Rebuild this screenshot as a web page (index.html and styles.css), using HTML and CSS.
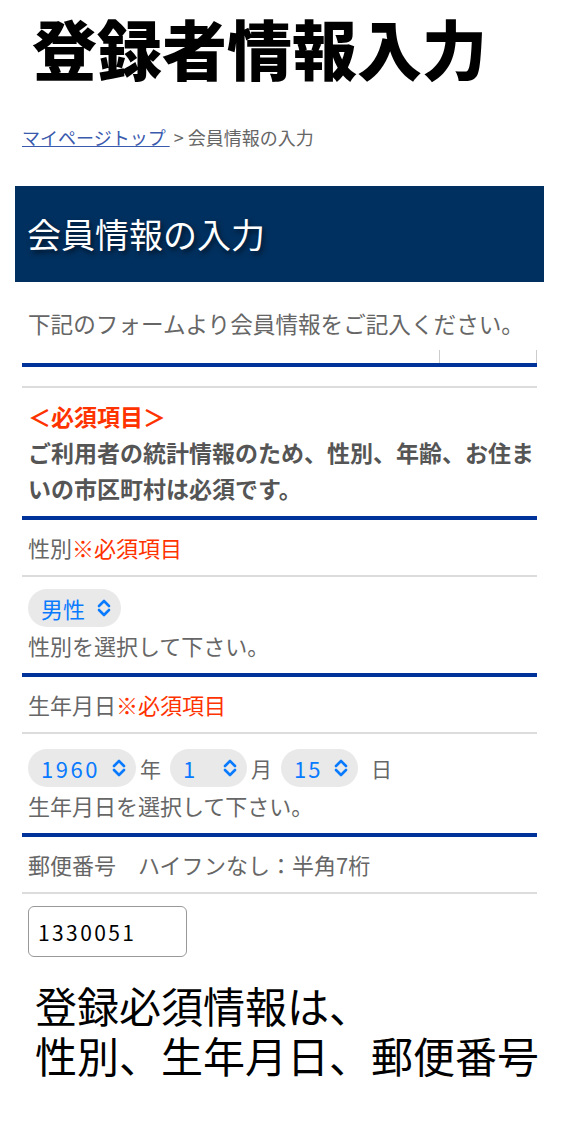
FILE: index.html
```html
<!DOCTYPE html>
<html lang="ja">
<head>
    <meta charset="UTF-8">
    <meta name="viewport" content="width=device-width, initial-scale=1.0">
    <title>登録者情報入力</title>
    <link rel="stylesheet" href="styles.css">
</head>
<body>
    <h1 class="page-title">登録者情報入力</h1>

    <p class="crumbs"><a href="#">マイページトップ </a>&nbsp;&gt; 会員情報の入力</p>

    <section class="panel">
        <h2 class="panel-head">会員情報の入力</h2>

        <div class="form">
            <p class="lead">下記のフォームより会員情報をご記入ください。</p>

            <div class="field">
                <span class="stub"></span>
                <div class="field-label empty"></div>
                <div class="notice">
                    <div class="notice-title">＜必須項目＞</div>
                    <p>ご利用者の統計情報のため、性別、年齢、お住まいの市区町村は必須です。</p>
                </div>
            </div>

            <div class="field">
                <div class="field-label">性別<span class="req">※必須項目</span></div>
                <div class="field-body">
                    <span class="pick w-sex">
                        <select id="sex">
                            <option>男性</option>
                            <option>女性</option>
                        </select>
                        <svg viewBox="0 0 16 18"><path d="M3 7 L8 2 L13 7 M3 11 L8 16 L13 11"/></svg>
                    </span>
                    <div class="help">性別を選択して下さい。</div>
                </div>
            </div>

            <div class="field">
                <div class="field-label">生年月日<span class="req">※必須項目</span></div>
                <div class="field-body">
                    <div class="date-row">
                        <span class="pick w-year">
                            <select id="year"><option>1960</option></select>
                            <svg viewBox="0 0 16 18"><path d="M3 7 L8 2 L13 7 M3 11 L8 16 L13 11"/></svg>
                        </span>
                        <span class="unit">年</span>
                        <span class="pick w-day">
                            <select id="month"><option>1</option></select>
                            <svg viewBox="0 0 16 18"><path d="M3 7 L8 2 L13 7 M3 11 L8 16 L13 11"/></svg>
                        </span>
                        <span class="unit">月</span>
                        <span class="pick w-day">
                            <select id="day"><option>15</option></select>
                            <svg viewBox="0 0 16 18"><path d="M3 7 L8 2 L13 7 M3 11 L8 16 L13 11"/></svg>
                        </span>
                        <span class="unit last">日</span>
                    </div>
                    <div class="help">生年月日を選択して下さい。</div>
                </div>
            </div>

            <div class="field">
                <div class="field-label">郵便番号　ハイフンなし：半角7桁</div>
                <div class="field-body zip-body">
                    <input type="text" class="zip" value="1330051">
                </div>
            </div>
        </div>
    </section>

    <p class="memo">登録必須情報は、<br>性別、生年月日、郵便番号</p>
</body>
</html>
```

FILE: styles.css
```css
body {
    margin: 0;
    padding: 0 38px 0 15px;
    font-family: "Noto Sans CJK JP", "Noto Sans", sans-serif;
    color: #666;
    background: #fff;
}

.page-title {
    margin: 0 0 0 17px;
    font-size: 65px;
    font-weight: 900;
    line-height: normal;
    color: #000;
}

.crumbs {
    margin: 31px 0 0 7px;
    font-size: 18px;
    line-height: 24px;
    color: #666;
}

.crumbs a {
    color: #3a5aae;
    text-decoration: underline;
}

.panel {
    margin-top: 37px;
}

.panel-head {
    margin: 0;
    height: 96px;
    padding: 0 12px;
    background: #00305f;
    color: #fff;
    font-size: 34px;
    font-weight: 400;
    line-height: 96px;
    text-shadow: 2px 3px 5px rgba(0, 0, 0, 0.6);
}

.form {
    margin: 0 7px;
}

.lead {
    margin: 0;
    padding: 24px 6px 0;
    height: 57px;
    font-size: 22.6px;
    line-height: 36px;
}

.field {
    position: relative;
    border-top: 4px solid #003399;
}

.stub {
    position: absolute;
    right: 0;
    top: -17px;
    width: 96px;
    height: 13px;
    background: #fff;
    border-left: 1px solid #ccc;
    border-right: 1px solid #ccc;
}

.field-label {
    height: 55px;
    padding: 0 6px;
    font-size: 22px;
    line-height: 55px;
    border-bottom: 2px solid #dcdcdc;
}

.field-label.empty {
    height: 19px;
}

.req {
    color: #ff3300;
}

.notice {
    padding: 10px 0 10px 6px;
    font-weight: 700;
    font-size: 23px;
    line-height: 36px;
}

.notice-title {
    color: #ff3300;
}

.notice p {
    margin: 0;
    color: #555;
}

.field-body {
    padding: 12px 6px 10px;
}

.pick {
    position: relative;
    display: inline-block;
    vertical-align: middle;
}

.pick select {
    -webkit-appearance: none;
    appearance: none;
    display: block;
    height: 38px;
    padding: 0 0 0 13px;
    border: none;
    border-radius: 19px;
    background: #e9e9e9;
    color: #0a7aff;
    font-family: inherit;
    font-size: 22px;
}

.pick svg {
    position: absolute;
    right: 9px;
    top: 10px;
    width: 16px;
    height: 18px;
    fill: none;
    stroke: #0a7aff;
    stroke-width: 2.6;
    stroke-linecap: round;
    stroke-linejoin: round;
    pointer-events: none;
}

.w-sex select { width: 93px; }
.w-year select { width: 108px; letter-spacing: 2.5px; }
.w-day select { width: 77px; letter-spacing: 2px; }

.date-row {
    display: flex;
    align-items: center;
    margin-top: 3px;
}

.unit {
    margin: 0 9px 0 4px;
    font-size: 21px;
}

.unit.last {
    margin-left: 13px;
}

.help {
    font-size: 22px;
    line-height: 36px;
}

.zip-body {
    padding-top: 12px;
}

.zip {
    display: block;
    width: 159px;
    height: 51px;
    box-sizing: border-box;
    margin: 0;
    padding: 0 9px;
    border: 1.5px solid #999;
    border-radius: 6px;
    font-family: inherit;
    font-size: 21px;
    letter-spacing: 2.4px;
    color: #000;
}

.memo {
    margin: 13px 0 0 20px;
    font-size: 42px;
    line-height: 50px;
    color: #000;
}
```
